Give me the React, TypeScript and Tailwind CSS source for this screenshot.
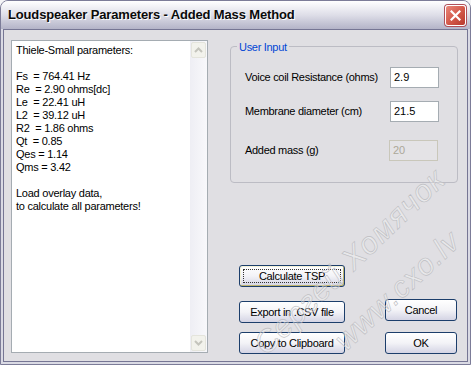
import clsx from 'clsx';

const LINES = [
  'Thiele-Small parameters:',
  '',
  'Fs  = 764.41 Hz',
  'Re  = 2.90 ohms[dc]',
  'Le  = 22.41 uH',
  'L2  = 39.12 uH',
  'R2  = 1.86 ohms',
  'Qt  = 0.85',
  'Qes = 1.14',
  'Qms = 3.42',
  '',
  'Load overlay data,',
  'to calculate all parameters!',
];

function XPButton({
  children,
  className,
  focused,
}: {
  children: React.ReactNode;
  className?: string;
  focused?: boolean;
}) {
  return (
    <button
      className={clsx(
        'relative flex h-[22px] items-center justify-center rounded-[3px] border border-[#1c3e6b] bg-gradient-to-b from-white via-[#f3f3f7] to-[#d4d4e4] text-[11px] tracking-[-0.3px] text-black',
        focused && 'shadow-[inset_-1px_-1px_0_#bfb56f,inset_1px_1px_0_#f4f2d8]',
        className,
      )}
    >
      {focused && <span className="pointer-events-none absolute inset-[3px] border border-dotted border-[#333]" />}
      {children}
    </button>
  );
}

function Chevron({ up }: { up?: boolean }) {
  return (
    <svg width="9" height="6" viewBox="0 0 9 6">
      <path
        d={up ? 'M1 5 L4.5 1.5 L8 5' : 'M1 1 L4.5 4.5 L8 1'}
        fill="none"
        stroke="#c4c4bc"
        strokeWidth="2"
      />
    </svg>
  );
}

function Field({ label, value, disabled, className }: { label: string; value: string; disabled?: boolean; className?: string }) {
  return (
    <div className={clsx('flex items-center justify-between', className)}>
      <span className="text-[11px] tracking-[-0.3px] text-black">{label}</span>
      <div
        className={clsx(
          'flex h-[21px] w-[49px] items-center border px-[3px] text-[11px]',
          disabled ? 'mr-[1px] w-[47px] border-[#c9c7ba] bg-[#e4e3e6] text-[#aca899]' : 'border-[#a5acb2] bg-white text-black',
        )}
      >
        {value}
      </div>
    </div>
  );
}

export default function App() {
  return (
    <div className="relative h-[365px] w-[471px] overflow-hidden bg-[#f4f4f6] font-['Liberation_Sans',Tahoma,sans-serif]">
      <div className="flex h-full flex-col rounded-t-[8px] border border-[#7c7c98] bg-[#dadae4]">
        {/* title bar */}
        <div className="flex h-[28px] shrink-0 items-center justify-between rounded-t-[7px] bg-gradient-to-b from-white via-[#dedee8] to-[#b4b4c8] pl-[7px] pr-[4px]">
          <span className="text-[13px] font-bold tracking-[-0.15px] text-[#0a0a0a] [text-shadow:1px_1px_0_#ffffff]">
            Loudspeaker Parameters - Added Mass Method
          </span>
          <div className="flex h-[21px] w-[21px] items-center justify-center rounded-[3px] border border-white bg-gradient-to-br from-[#e8877a] via-[#d45a4b] to-[#b8382c] shadow-[0_0_0_1px_#b0505a]">
            <svg width="11" height="11" viewBox="0 0 11 11">
              <path d="M1.5 1.5 L9.5 9.5 M9.5 1.5 L1.5 9.5" stroke="white" strokeWidth="2.2" strokeLinecap="square" />
            </svg>
          </div>
        </div>

        {/* body */}
        <div className="mx-[2px] mb-[2px] flex flex-1 border border-[#767694] bg-[#e0dfe3] pb-[7px] pl-[7px] pr-[9px] pt-[10px]">
          {/* text area */}
          <div className="flex h-[313px] w-[197px] shrink-0 border border-[#a5acb2] bg-white">
            <div className="flex-1 whitespace-pre pl-[4px] pt-[3px] text-[11px] leading-[13px] tracking-[-0.25px] text-black">
              {LINES.map((l, i) => (
                <div key={i} className="h-[13px]">
                  {l}
                </div>
              ))}
            </div>
            <div className="flex w-[17px] flex-col justify-between bg-gradient-to-r from-[#eeeef4] to-[#f8f8fb] p-[1px]">
              <div className="flex h-[16px] items-center justify-center rounded-[2px] border border-[#e4e4dc] bg-[#f2f2ec]">
                <Chevron up />
              </div>
              <div className="flex h-[16px] items-center justify-center rounded-[2px] border border-[#e4e4dc] bg-[#f2f2ec]">
                <Chevron />
              </div>
            </div>
          </div>

          {/* right column */}
          <div className="ml-[22px] flex flex-1 flex-col">
            <div className="relative mt-[6px] h-[137px] rounded-[4px] border border-[#bcbcc4] pl-[14px] pr-[18px] pt-[20px]">
              <span className="absolute -top-[8px] left-[6px] bg-[#e0dfe3] px-[2px] text-[11px] tracking-[-0.3px] text-[#0046d5]">
                User Input
              </span>
              <Field label="Voice coil Resistance (ohms)" value="2.9" />
              <Field label="Membrane diameter (cm)" value="21.5" className="mt-[13px]" />
              <Field label="Added mass (g)" value="20" disabled className="mt-[18px]" />
            </div>

            <div className="mt-auto flex justify-between pl-[9px] pr-[1px]">
              <div className="flex flex-col">
                <XPButton focused className="w-[106px]">
                  Calculate TSP
                </XPButton>
                <XPButton className="mt-[14px] w-[106px]">Export in .CSV file</XPButton>
                <XPButton className="mt-[9px] w-[106px]">Copy to Clipboard</XPButton>
              </div>
              <div className="flex flex-col justify-end">
                <XPButton className="w-[72px]">Cancel</XPButton>
                <XPButton className="mt-[11px] w-[72px]">OK</XPButton>
              </div>
            </div>
          </div>
        </div>
      </div>

      {/* watermark */}
      <div className="pointer-events-none absolute left-[350px] top-[262px] -translate-x-1/2 -translate-y-1/2 -rotate-[44deg] whitespace-nowrap text-[31px] italic tracking-[1px] text-white/30 [-webkit-text-stroke:0.6px_#bdbdc2]">
        Сергей Хомячок
      </div>
      <div className="pointer-events-none absolute left-[397px] top-[290px] -translate-x-1/2 -translate-y-1/2 -rotate-[43deg] whitespace-nowrap text-[30px] italic tracking-[1px] text-white/30 [-webkit-text-stroke:0.6px_#bdbdc2]">
        www.cxo.lv
      </div>
    </div>
  );
}
